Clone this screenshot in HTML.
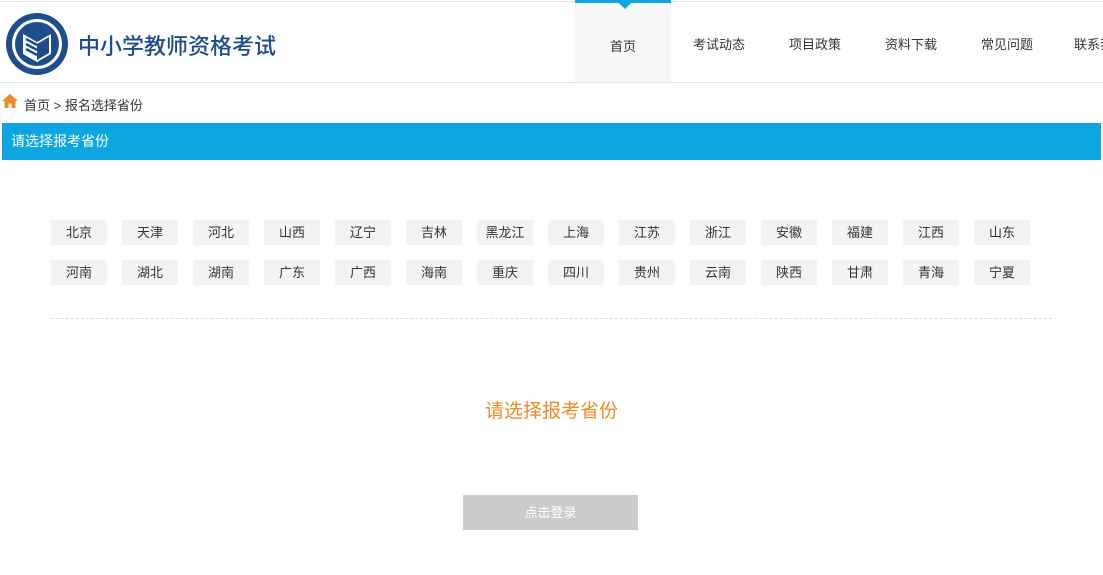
<!DOCTYPE html>
<html><head><meta charset="utf-8"><style>
*{margin:0;padding:0;box-sizing:border-box}
body{width:1103px;height:575px;overflow:hidden;background:#fff;font-family:"Liberation Sans","Microsoft YaHei","Noto Sans CJK SC",sans-serif;position:relative;color:#333}
.a{position:absolute}
.hdr{left:0;top:1px;width:1103px;height:82px;border-top:1px solid #e5e5e5;border-bottom:1px solid #e5e5e5}
.title{left:78px;top:29px;font-size:22px;color:#1f4c8a;font-weight:500;letter-spacing:0}
.nav{top:0;height:82px;width:96px;text-align:center;line-height:90px;font-size:13px;color:#333}
.act{background:#f7f7f7;border-top:3px solid #0ea6e0}
.tri{left:619px;top:3px;width:0;height:0;border-left:6px solid transparent;border-right:6px solid transparent;border-top:6px solid #0ea6e0}
.crumb{left:24px;top:95px;font-size:13px;color:#333}
.bar{left:2px;top:123px;width:1099px;height:37px;background:#0ea6e0;color:#fff;font-size:14px;line-height:37px;padding-left:9px}
.p{width:56px;height:25px;background:#f3f3f3;font-size:13px;text-align:center;line-height:25px;color:#333}
.dash{left:51px;top:318px;width:1001px;border-top:1px dashed #ddd}
.msg{left:0;width:1103px;top:396px;text-align:center;font-size:19px;color:#f08a24}
.btn{left:463px;top:495px;width:175px;height:35px;background:#ccc;color:#fff;font-size:13px;text-align:center;line-height:35px}
</style></head><body>
<div class="a hdr"></div>
<svg class="a" style="left:5px;top:12px" width="64" height="64" viewBox="0 0 64 64">
<circle cx="32" cy="32" r="31" fill="#1f4c8a"/><circle cx="32" cy="32" r="25" fill="#fff"/><circle cx="32" cy="32" r="22" fill="#1f4c8a"/>
<path d="M18 22 L32 30 L46 22 L46 42 L32 50 L18 42Z" fill="#fff"/>
<path d="M21 27 L32 33 M21 32 L32 38 M21 37 L32 43" stroke="#1f4c8a" stroke-width="2.5"/>
<path d="M32 32 L44 25 L44 41 L32 48Z" fill="#1f4c8a"/>
</svg>
<div class="a title">中小学教师资格考试</div>
<div class="a nav act" style="left:575px;line-height:87px">首页</div>
<div class="a tri"></div>
<div class="a nav" style="left:671px">考试动态</div>
<div class="a nav" style="left:767px">项目政策</div>
<div class="a nav" style="left:863px">资料下载</div>
<div class="a nav" style="left:959px">常见问题</div>
<div class="a nav" style="left:1055px;text-align:left;padding-left:19px">联系我们</div>
<svg class="a" style="left:2px;top:94px" width="16" height="14" viewBox="0 0 16 14"><path d="M8 0 L16 7 L13.5 7 L13.5 14 L9.5 14 L9.5 9.5 L6.5 9.5 L6.5 14 L2.5 14 L2.5 7 L0 7Z" fill="#f08a24"/></svg>
<div class="a crumb">首页 &gt; 报名选择省份</div>
<div class="a bar">请选择报考省份</div>
<div class="a p" style="left:51px;top:220px">北京</div><div class="a p" style="left:122px;top:220px">天津</div><div class="a p" style="left:193px;top:220px">河北</div><div class="a p" style="left:264px;top:220px">山西</div><div class="a p" style="left:335px;top:220px">辽宁</div><div class="a p" style="left:406px;top:220px">吉林</div><div class="a p" style="left:477px;top:220px">黑龙江</div><div class="a p" style="left:548px;top:220px">上海</div><div class="a p" style="left:619px;top:220px">江苏</div><div class="a p" style="left:690px;top:220px">浙江</div><div class="a p" style="left:761px;top:220px">安徽</div><div class="a p" style="left:832px;top:220px">福建</div><div class="a p" style="left:903px;top:220px">江西</div><div class="a p" style="left:974px;top:220px">山东</div>
<div class="a p" style="left:51px;top:260px">河南</div><div class="a p" style="left:122px;top:260px">湖北</div><div class="a p" style="left:193px;top:260px">湖南</div><div class="a p" style="left:264px;top:260px">广东</div><div class="a p" style="left:335px;top:260px">广西</div><div class="a p" style="left:406px;top:260px">海南</div><div class="a p" style="left:477px;top:260px">重庆</div><div class="a p" style="left:548px;top:260px">四川</div><div class="a p" style="left:619px;top:260px">贵州</div><div class="a p" style="left:690px;top:260px">云南</div><div class="a p" style="left:761px;top:260px">陕西</div><div class="a p" style="left:832px;top:260px">甘肃</div><div class="a p" style="left:903px;top:260px">青海</div><div class="a p" style="left:974px;top:260px">宁夏</div>
<div class="a dash"></div>
<div class="a msg">请选择报考省份</div>
<div class="a btn">点击登录</div>
</body></html>
